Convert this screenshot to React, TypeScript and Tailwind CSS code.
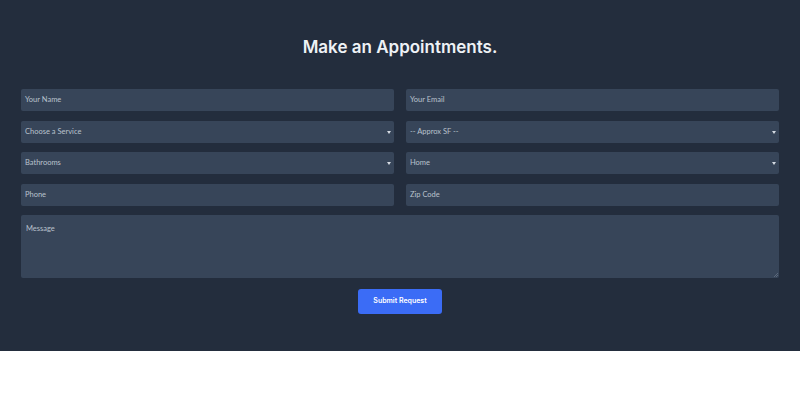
import React from "react";

const Field = ({ label, select }: { label: string; select?: boolean }) => (
  <div className="relative h-[22px] bg-[#374559] rounded-[2px] flex items-center pl-[4px] text-[7.5px] text-[#b9c2cd]">
    <span>{label}</span>
    {select && (
      <span className="absolute right-[3px] top-[10px] w-0 h-0 border-l-[2px] border-r-[2px] border-t-[3px] border-l-transparent border-r-transparent border-t-[#d5dbe3]" />
    )}
  </div>
);

export default function App() {
  return (
    <div className="w-[800px] h-[397px] bg-white" style={{ fontFamily: "Lato, 'Open Sans', sans-serif" }}>
      <div className="h-[351px] bg-[#232d3d] flex flex-col items-center">
        <h1
          className="mt-[36px] h-[22px] leading-[22px] text-[17px] font-semibold text-[#eef2f6]"
          style={{ fontFamily: "Inter, sans-serif" }}
        >
          Make an Appointments.
        </h1>
        <div className="mt-[31px] w-[758px] grid grid-cols-2 gap-x-[12px] gap-y-[9.5px]">
          <Field label="Your Name" />
          <Field label="Your Email" />
          <Field label="Choose a Service" select />
          <Field label="-- Approx SF --" select />
          <Field label="Bathrooms" select />
          <Field label="Home" select />
          <Field label="Phone" />
          <Field label="Zip Code" />
          <div className="col-span-2 relative h-[63px] bg-[#374559] rounded-[2px] pl-[5px] pt-[8px] text-[7.5px] text-[#b9c2cd]">
            Message
            <svg className="absolute right-[1px] bottom-[1px]" width="5" height="5" viewBox="0 0 5 5">
              <path d="M5 1 L1 5 M5 3 L3 5" stroke="#6b7789" strokeWidth="0.7" />
            </svg>
          </div>
        </div>
        <button className="mt-[11px] w-[84px] h-[25px] rounded-[3px] bg-[#3b6cf6] text-white text-[7px] font-semibold" style={{ fontFamily: "Inter, sans-serif" }}>
          Submit Request
        </button>
      </div>
    </div>
  );
}
